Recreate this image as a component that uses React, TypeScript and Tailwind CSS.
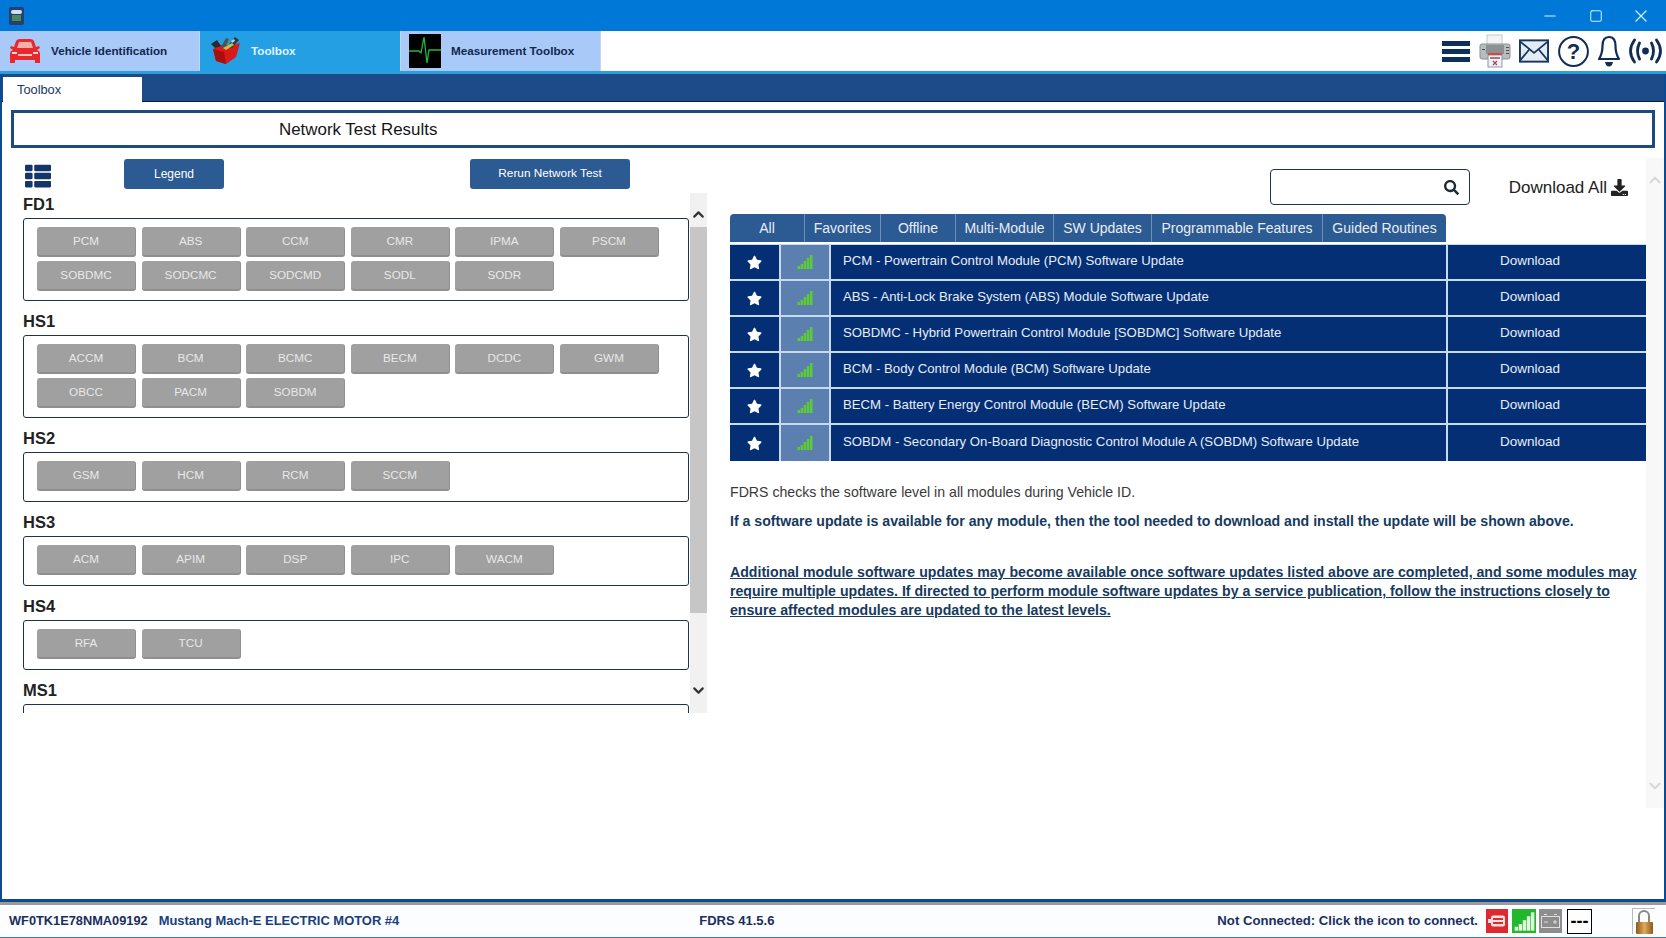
import { ChevronDown, ChevronUp, Minus, Square, X } from "lucide-react";
import { FaDownload, FaSearch, FaStar, FaThList } from "react-icons/fa";

const groups = [
  { name: "FD1", modules: ["PCM", "ABS", "CCM", "CMR", "IPMA", "PSCM", "SOBDMC", "SODCMC", "SODCMD", "SODL", "SODR"] },
  { name: "HS1", modules: ["ACCM", "BCM", "BCMC", "BECM", "DCDC", "GWM", "OBCC", "PACM", "SOBDM"] },
  { name: "HS2", modules: ["GSM", "HCM", "RCM", "SCCM"] },
  { name: "HS3", modules: ["ACM", "APIM", "DSP", "IPC", "WACM"] },
  { name: "HS4", modules: ["RFA", "TCU"] },
  { name: "MS1", modules: [] as string[] },
];

const filterTabs = [
  { label: "All", width: "w-[75px]" },
  { label: "Favorites", width: "w-[76px]" },
  { label: "Offline", width: "w-[75px]" },
  { label: "Multi-Module", width: "w-[98px]" },
  { label: "SW Updates", width: "w-[98px]" },
  { label: "Programmable Features", width: "w-[171px]" },
  { label: "Guided Routines", width: "w-[123px]" },
];

const updates = [
  "PCM - Powertrain Control Module (PCM) Software Update",
  "ABS - Anti-Lock Brake System (ABS) Module Software Update",
  "SOBDMC - Hybrid Powertrain Control Module [SOBDMC] Software Update",
  "BCM - Body Control Module (BCM) Software Update",
  "BECM - Battery Energy Control Module (BECM) Software Update",
  "SOBDM - Secondary On-Board Diagnostic Control Module A (SOBDM) Software Update",
];

const CarIcon = () => (
  <svg width="32" height="26" viewBox="0 0 32 26">
    <path d="M7 3 Q8 1 11 1 H21 Q24 1 25 3 L27 9 L30 8 L31 10 L28 12 Q31 13 31 16 V25 H26 V22 H6 V25 H1 V16 Q1 13 4 12 L1 10 L2 8 L5 9 Z" fill="#e8282c" />
    <path d="M8 10 L10 4 H22 L24 10 Z" fill="#f3b0a8" />
    <rect x="9" y="16" width="14" height="2" fill="#f7c4bc" />
    <rect x="3" y="14" width="5" height="2" fill="#fbd9d0" />
    <rect x="24" y="14" width="5" height="2" fill="#fbd9d0" />
  </svg>
);

const ToolboxIcon = () => (
  <svg width="32" height="28" viewBox="0 0 32 28">
    <path d="M3 12 L10 8 L24 8 L30 6 L26 20 L16 27 L6 24 Z" fill="#d81a1a" />
    <path d="M3 12 L14 15 L16 27 L6 24 Z" fill="#a81010" />
    <path d="M1 7 L7 3 L11 9 L5 11 Z" fill="#2b2b2b" />
    <path d="M11 10 L16 1 L19 2 L15 11 Z" fill="#4d5359" />
    <path d="M17 10 L25 0 L29 3 L22 11 Z" fill="#2f383f" />
    <path d="M13 11 L22 6 L24 8 L16 13 Z" fill="#c9c23a" />
    <path d="M21 4 L24 2 L25 4 L22 6 Z" fill="#c5ccd2" />
  </svg>
);

const EcgIcon = () => (
  <svg width="32" height="34" viewBox="0 0 32 34" className="bg-black">
    <path d="M0 17 H10 L12 19 L15 3 L18 29 L20 16 H32" fill="none" stroke="#22b83a" strokeWidth="1.3" />
  </svg>
);

const PrinterIcon = () => (
  <svg width="32" height="34" viewBox="0 0 32 34">
    <rect x="8" y="1" width="15" height="11" fill="#f1f3f4" stroke="#c6c9cc" />
    <path d="M3 10 H29 Q31 10 31 12 V23 Q31 25 29 25 H3 Q1 25 1 23 V12 Q1 10 3 10 Z" fill="#b7bcbe" stroke="#8b8f92" />
    <rect x="7" y="11" width="18" height="9" fill="#8c9194" />
    <rect x="3" y="15" width="3" height="1" fill="#4f4f4f" />
    <rect x="27" y="13" width="3" height="1" fill="#4f4f4f" />
    <rect x="27" y="16" width="3" height="1" fill="#4f4f4f" />
    <rect x="27" y="19" width="3" height="1" fill="#4f4f4f" />
    <rect x="9" y="21" width="14" height="12" fill="#f3f1f4" stroke="#8796b8" />
    <rect x="9" y="19" width="14" height="2" fill="#d8463c" />
    <path d="M11 24 H21 M14 27 L18 31 M18 27 L14 31" stroke="#a24a58" strokeWidth="1.3" />
  </svg>
);

const EnvelopeIcon = () => (
  <svg width="30" height="24" viewBox="0 0 31 24">
    <rect x="1" y="1" width="29" height="22" fill="#e3ebf4" stroke="#17365f" strokeWidth="2" />
    <path d="M1 2 L15.5 14 L30 2 M1 22 L11 10 M30 22 L20 10" fill="none" stroke="#17365f" strokeWidth="1.8" />
  </svg>
);

const HelpIcon = () => (
  <svg width="31" height="31" viewBox="0 0 31 31">
    <circle cx="15.5" cy="15.5" r="14.4" fill="none" stroke="#132c54" strokeWidth="2" />
    <text x="15.5" y="23" textAnchor="middle" fontSize="22" fontWeight="700" fontFamily="Liberation Sans" fill="#132c54">?</text>
  </svg>
);

const BellIcon = () => (
  <svg width="24" height="32" viewBox="0 0 23 32">
    <path d="M11.5 2 C6.5 2 5 6 5 11 C5 17 4 20 1.5 24 H21.5 C19 20 18 17 18 11 C18 6 16.5 2 11.5 2 Z" fill="none" stroke="#132c54" strokeWidth="2.2" strokeLinejoin="round" />
    <path d="M7.5 27 H15.5 Q14.5 31.5 11.5 31.5 Q8.5 31.5 7.5 27 Z" fill="#132c54" />
  </svg>
);

const BroadcastIcon = () => (
  <svg width="33" height="26" viewBox="0 0 33 26">
    <circle cx="16.5" cy="13" r="3.4" fill="#132c54" />
    <path d="M10.5 5 Q6.5 13 10.5 21 M22.5 5 Q26.5 13 22.5 21 M5.5 2 Q-2.5 13 5.5 24 M27.5 2 Q35.5 13 27.5 24" fill="none" stroke="#132c54" strokeWidth="2.8" strokeLinecap="round" />
  </svg>
);

const SignalBars = ({ color, height }: { color: string; height: number }) => (
  <svg width={height} height={height} viewBox="0 0 16 16">
    <rect x="0.5" y="12" width="2.6" height="3" fill={color} />
    <rect x="3.6" y="10" width="2.6" height="5" fill={color} />
    <rect x="6.7" y="7" width="2.6" height="8" fill={color} />
    <rect x="9.8" y="4" width="2.6" height="11" fill={color} />
    <rect x="12.9" y="1" width="2.6" height="14" fill={color} />
  </svg>
);

const AppTab = ({ label, icon, active, iconBox, width }: { label: string; icon: React.ReactNode; active?: boolean; iconBox: string; width: string }) => (
  <div className={`${width} h-[40px] flex items-center border-r border-[#c4d6ee] ${active ? "bg-[#259fe4] text-[#dff4ff]" : "bg-[#a9c9f9] text-[#12274d]"}`}>
    <div className={`shrink-0 flex justify-center ${iconBox}`}>{icon}</div>
    <span className="text-[11.7px] font-bold">{label}</span>
  </div>
);

const ModuleGroup = ({ name, modules }: { name: string; modules: string[] }) => (
  <div className="w-[666px]">
    <div className="h-[25px] text-[16.5px] leading-[23px] font-bold text-[#222]">{name}</div>
    <div className="border border-[#1d3347] rounded-[3px] pt-[8px] pb-[9.5px] pl-[13px] pr-[4px] bg-white min-h-[50px] flex flex-wrap gap-x-[5.6px] gap-y-[3.5px]">
      {modules.map((m) => (
        <div key={m} className="w-[99px] h-[30px] flex items-center justify-center rounded-[3px] bg-[#a0a0a0] border-b-2 border-r border-[#8f8f8f] text-[11.7px] text-[#e8e8e8]">
          {m}
        </div>
      ))}
    </div>
  </div>
);

export default function App() {
  return (
    <div className="w-screen h-screen overflow-hidden flex flex-col bg-white font-['Liberation_Sans',Arial,sans-serif]">
      {/* title bar */}
      <div className="h-[31px] shrink-0 bg-[#0078d7] flex items-center justify-between">
        <div className="ml-[9px] w-[15px] h-[18px] rounded-[2px] bg-[#27406e] flex flex-col items-center justify-center">
          <div className="w-[11px] h-[4px] rounded-full bg-[#cfe0f4]" />
          <div className="w-[9px] h-[6px] mt-[1px] bg-[#4c8a5c]" />
        </div>
        <div className="flex items-center text-[#cff4ff]">
          <div className="w-[46px] flex justify-center"><Minus size={18} strokeWidth={1.5} /></div>
          <div className="w-[46px] flex justify-center"><Square size={14} strokeWidth={1.7} /></div>
          <div className="w-[44px] mr-[3px] flex justify-center"><X size={20} strokeWidth={1.5} /></div>
        </div>
      </div>

      {/* app tabs and tools */}
      <div className="h-[43px] shrink-0 bg-white border-b-[3px] border-[#2a9fdc] flex justify-between">
        <div className="flex">
          <AppTab label="Vehicle Identification" width="w-[200px]" icon={<CarIcon />} iconBox="w-[51px] pr-[1px]" />
          <AppTab label="Toolbox" width="w-[201px]" icon={<ToolboxIcon />} iconBox="w-[51px]" active />
          <AppTab label="Measurement Toolbox" width="w-[200px]" icon={<EcgIcon />} iconBox="w-[48px] mr-[2px]" />
        </div>
        <div className="flex items-center pr-[4px]">
          <div className="w-[28px] flex flex-col gap-[3px] mr-[9px]">
            <div className="h-[5px] bg-[#0f2e60]" />
            <div className="h-[5px] bg-[#0f2e60]" />
            <div className="h-[5px] bg-[#0f2e60]" />
          </div>
          <div className="mr-[8px]"><PrinterIcon /></div>
          <div className="mr-[9px]"><EnvelopeIcon /></div>
          <div className="mr-[8px]"><HelpIcon /></div>
          <div className="mr-[8px]"><BellIcon /></div>
          <BroadcastIcon />
        </div>
      </div>

      {/* tab frame */}
      <div className="flex-1 min-h-0 flex flex-col border-x-[2px] border-b-[3px] border-[#0e4a92]">
        <div className="h-[28px] shrink-0 bg-[#1d4a89] border-b border-[#0a1f3a] flex items-end pl-[1px]">
          <div className="w-[139px] h-[25px] -mb-[1px] bg-white text-[12.8px] text-[#1a3a5e] pl-[14px] flex items-center">Toolbox</div>
        </div>

        <div className="flex-1 min-h-0 flex flex-col pt-[8px] bg-white">
          <div className="mx-[9px] h-[38px] shrink-0 border-[3px] border-[#1f4a7c] flex items-center pt-[1px] pl-[265px] text-[16.9px] text-[#151515]">
            Network Test Results
          </div>

          <div className="flex-1 min-h-0 flex">
            {/* left column */}
            <div className="w-[705px] shrink-0 pl-[21px] flex flex-col pt-[11px] h-[565px]">
              <div className="h-[30px] shrink-0 flex items-center">
                <FaThList className="text-[#13356a] ml-[2px] mt-[4px]" size={26} />
                <div className="ml-[73px] w-[100px] h-[30px] rounded-[3px] bg-[#2c5a92] text-white text-[12px] flex items-center justify-center">Legend</div>
                <div className="ml-[246px] w-[160px] h-[30px] rounded-[3px] bg-[#2c5a92] text-white text-[11.8px] flex items-center justify-center">Rerun Network Test</div>
              </div>
              <div className="flex-1 min-h-0 flex mt-[4px]">
                <div className="flex-1 min-w-0 overflow-hidden">
                  <div className="flex flex-col gap-[9px]">
                    {groups.map((g) => <ModuleGroup key={g.name} name={g.name} modules={g.modules} />)}
                  </div>
                </div>
                <div className="w-[17px] shrink-0 bg-[#f1f1f1] flex flex-col items-center text-[#333]">
                  <ChevronUp size={17} strokeWidth={3} className="mt-[13px] shrink-0" />
                  <div className="w-full h-[386px] bg-[#c6c6c6] mt-[4px] shrink-0" />
                  <ChevronDown size={17} strokeWidth={3} className="mt-[69px] shrink-0" />
                </div>
              </div>
            </div>

            {/* right column */}
            <div className="flex-1 min-w-0 pl-[23px] flex">
              <div className="w-[916px] shrink-0">
                <div className="h-[66px] flex items-start justify-end">
                  <div className="mt-[21px] w-[200px] h-[36px] border border-[#1d3347] rounded-[4px] flex items-center justify-end pr-[10px] text-[#1c2b3a]">
                    <FaSearch size={15} />
                  </div>
                  <div className="mt-[27px] ml-[39px] mr-[18px] flex items-center gap-[4px] text-[17px] text-[#222]">
                    Download All <FaDownload size={17} />
                  </div>
                </div>
                <div className="flex h-[28px]">
                  {filterTabs.map((t, i) => (
                    <div key={t.label} className={`${t.width} h-[28px] bg-[#2c5a92] text-[14px] text-[#e8edf4] flex items-center justify-center border-r border-[#6d8fb8] ${i === 0 ? "rounded-tl-[4px]" : ""} ${i === filterTabs.length - 1 ? "rounded-tr-[4px] border-r-0" : ""}`}>
                      {t.label}
                    </div>
                  ))}
                </div>
                <div className="mt-[2px] flex flex-col border-t-[1px] border-[#c7dbf0]">
                  {updates.map((u) => (
                    <div key={u} className="flex h-[36px] border-b-[2px] border-[#c7dbf0] last:border-b-0 bg-[#042f75] text-[#e6edf6] text-[13.2px]">
                      <div className="w-[49px] flex items-center justify-center"><FaStar size={15} className="text-white" /></div>
                      <div className="w-[52px] border-x-[2px] border-[#c7dbf0] bg-[#5b7fae] flex items-center justify-center"><SignalBars color="#5ccb34" height={16} /></div>
                      <div className="flex-1 flex items-center pl-[12px] pb-[3px]">{u}</div>
                      <div className="w-[200px] border-l-[2px] border-[#c7dbf0] flex items-center justify-center pr-[34px] pb-[1px] text-[13.5px]">Download</div>
                    </div>
                  ))}
                </div>
                <div className="mt-[22px] text-[14.13px] leading-[19px] text-[#3a3a3a]">FDRS checks the software level in all modules during Vehicle ID.</div>
                <div className="mt-[10px] text-[14.13px] leading-[19px] font-bold text-[#173a5e]">
                  If a software update is available for any module, then the tool needed to download and install the update will be shown above.
                </div>
                <div className="mt-[32px] text-[14.13px] leading-[19px] font-bold text-[#173a5e] underline">
                  Additional module software updates may become available once software updates listed above are completed, and some modules may require multiple updates. If directed to perform module software updates by a service publication, follow the instructions closely to ensure affected modules are updated to the latest levels.
                </div>
              </div>
              <div className="flex-1 bg-[#f8f8f8] flex flex-col items-center text-[#d8d8d8] h-[650px] mt-[10px]">
                <ChevronUp size={18} strokeWidth={3} className="mt-[13px]" />
                <ChevronDown size={18} strokeWidth={3} className="mt-[588px]" />
              </div>
            </div>
          </div>
        </div>
      </div>

      {/* status bar */}
      <div className="h-[36px] shrink-0 bg-[#fbfdff] border-t-[3px] border-[#9a9a9a] border-b-[1px] border-b-[#3f7ea6] flex items-center font-bold text-[#1b2f5e] pl-[9px] pr-[11px]">
        <span className="text-[12.8px]">WF0TK1E78NMA09192</span>
        <span className="ml-[11px] text-[#1a3f7a] text-[12.95px]">Mustang Mach-E ELECTRIC MOTOR #4</span>
        <span className="ml-[300px] text-[13px]">FDRS 41.5.6</span>
        <span className="ml-auto text-[13.15px]">Not Connected: Click the icon to connect.</span>
        <div className="ml-[8px] w-[22px] h-[24px] bg-[#dd2a2f] flex items-center justify-center">
          <svg width="18" height="12" viewBox="0 0 18 12">
            <rect x="3" y="0.5" width="14" height="11" rx="2" fill="#f7dfe1" />
            <rect x="0" y="4" width="4" height="4" fill="#f7dfe1" />
            <rect x="5" y="3" width="10" height="2" fill="#dd2a2f" />
            <rect x="5" y="7" width="10" height="2" fill="#dd2a2f" />
          </svg>
        </div>
        <div className="ml-[4px] w-[24px] h-[24px] bg-[#22b82e] flex items-center justify-center"><SignalBars color="#e4f7de" height={21} /></div>
        <div className="ml-[3px] w-[23px] h-[24px] bg-[#8d8d8d] flex items-center justify-center">
          <svg width="19" height="14" viewBox="0 0 19 14">
            <rect x="0.5" y="2.5" width="18" height="11" fill="none" stroke="#e0e0e0" />
            <path d="M3 0.5 H6 M13 0.5 H16 M3 8 H7 M12 8 H16 M14 6 V10" stroke="#e0e0e0" fill="none" />
          </svg>
        </div>
        <div className="ml-[5px] w-[25px] h-[25px] bg-white border border-black flex items-center justify-center text-[18px] leading-none font-bold text-black">---</div>
        <div className="ml-[40px] w-[23px] h-[26px] border-l border-t border-[#b9b9b9] flex flex-col items-center justify-end">
          <div className="w-[12px] h-[12px] rounded-t-full border-2 border-b-0 border-[#8a8a7c]" />
          <div className="w-[17px] h-[12px] rounded-[1px] bg-gradient-to-r from-[#8a5a1f] via-[#e0a95a] to-[#8a5a1f]" />
        </div>
      </div>
    </div>
  );
}
